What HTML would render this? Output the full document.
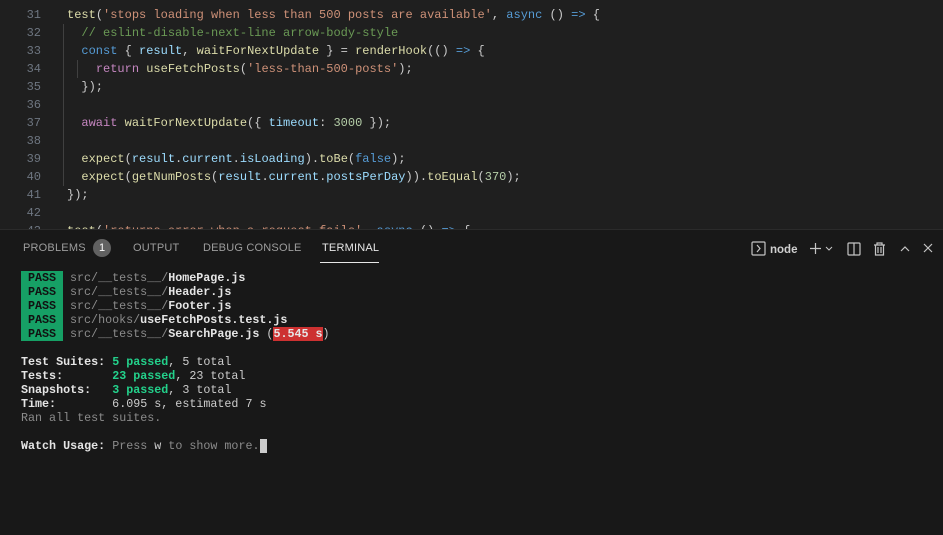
<!DOCTYPE html>
<html><head><style>
body{margin:0;width:943px;height:534px;background:#1f1f1f;overflow:hidden;font-family:"Liberation Mono",monospace;}
.ed{position:absolute;left:0;top:0;width:943px;height:229px;background:#1f1f1f;overflow:hidden}
.ln{position:absolute;height:18px;line-height:18px;font-size:12px;white-space:pre}
.num{color:#6e7681;width:41px;text-align:right;left:0}
.code{left:67px;color:#cccccc}
.s{color:#ce9178}.k{color:#569cd6}.c{color:#6a9955}.f{color:#dcdcaa}.v{color:#9cdcfe}.p{color:#c586c0}.n{color:#b5cea8}.w{color:#d4d4d4}
.guide{position:absolute;width:1px;background:#404040}
.panel{position:absolute;left:0;top:229px;width:943px;height:305px;background:#181818;border-top:1px solid #2b2b2b}
.tab{position:absolute;top:12px;font-family:"Liberation Sans",sans-serif;font-size:11px;color:#9d9d9d;letter-spacing:.2px}
.t{position:absolute;left:21px;font-size:11.7px;line-height:14px;white-space:pre;color:#cccccc}
.pass{background:#16a065;color:#111;font-weight:bold;padding:0 4px;display:inline-block;width:34px;text-align:center}
.g{color:#8b8b8b}.b{font-weight:bold;color:#e5e5e5}.gr{color:#23d18b;font-weight:bold}
</style></head><body>
<div class="ed">
<div class="guide" style="left:63px;top:24px;height:162px"></div>
<div class="guide" style="left:77px;top:60px;height:18px"></div>
<div class="ln num" style="top:6px">31</div><div class="ln code" style="top:6px"><span class="f">test</span>(<span class="s">'stops loading when less than 500 posts are available'</span>, <span class="k">async</span> () <span class="k">=&gt;</span> {</div>
<div class="ln num" style="top:24px">32</div><div class="ln code" style="top:24px">  <span class="c">// eslint-disable-next-line arrow-body-style</span></div>
<div class="ln num" style="top:42px">33</div><div class="ln code" style="top:42px">  <span class="k">const</span> { <span class="v">result</span>, <span class="f">waitForNextUpdate</span> } = <span class="f">renderHook</span>(() <span class="k">=&gt;</span> {</div>
<div class="ln num" style="top:60px">34</div><div class="ln code" style="top:60px">    <span class="p">return</span> <span class="f">useFetchPosts</span>(<span class="s">'less-than-500-posts'</span>);</div>
<div class="ln num" style="top:78px">35</div><div class="ln code" style="top:78px">  });</div>
<div class="ln num" style="top:96px">36</div>
<div class="ln num" style="top:114px">37</div><div class="ln code" style="top:114px">  <span class="p">await</span> <span class="f">waitForNextUpdate</span>({ <span class="v">timeout</span>: <span class="n">3000</span> });</div>
<div class="ln num" style="top:132px">38</div>
<div class="ln num" style="top:150px">39</div><div class="ln code" style="top:150px">  <span class="f">expect</span>(<span class="v">result</span>.<span class="v">current</span>.<span class="v">isLoading</span>).<span class="f">toBe</span>(<span class="k">false</span>);</div>
<div class="ln num" style="top:168px">40</div><div class="ln code" style="top:168px">  <span class="f">expect</span>(<span class="f">getNumPosts</span>(<span class="v">result</span>.<span class="v">current</span>.<span class="v">postsPerDay</span>)).<span class="f">toEqual</span>(<span class="n">370</span>);</div>
<div class="ln num" style="top:186px">41</div><div class="ln code" style="top:186px">});</div>
<div class="ln num" style="top:204px">42</div>
<div class="ln num" style="top:222px">43</div><div class="ln code" style="top:222px"><span class="f">test</span>(<span class="s">'returns error when a request fails'</span>, <span class="k">async</span> () <span class="k">=&gt;</span> {</div>
</div>
<div class="panel">
<div class="tab" style="left:23px">PROBLEMS</div>
<div style="position:absolute;left:93px;top:9px;width:18px;height:18px;border-radius:9px;background:#616161;color:#fff;font:11px 'Liberation Sans',sans-serif;text-align:center;line-height:18px">1</div>
<div class="tab" style="left:133px">OUTPUT</div>
<div class="tab" style="left:203px">DEBUG CONSOLE</div>
<div class="tab" style="left:322px;color:#e7e7e7">TERMINAL</div>
<div style="position:absolute;left:320px;top:32px;width:59px;height:1px;background:#e7e7e7"></div>
<svg style="position:absolute;left:750px;top:10px" width="190" height="18" viewBox="0 0 190 18" fill="none" stroke="#c5c5c5" stroke-width="1.2">
<rect x="2" y="2" width="13" height="13" rx="1"/><path d="M7 5l3 3.5-3 3.5"/>
<text x="20" y="13" fill="#d0d0d0" stroke="none" font-family="Liberation Sans" font-size="11.5" font-weight="bold">node</text>
<path d="M60 8.5h11M65.5 3v11"/><path d="M76 7l3 3 3-3" stroke-width="1"/>
<rect x="98" y="3" width="12" height="12" rx="1"/><path d="M104 3v12"/>
<path d="M124 5h11M127 5V3h5v2M125.5 5v10h8V5M128 7v6M131 7v6"/>
<path d="M151 11l4-4 4 4"/><path d="M174 4l8 8M182 4l-8 8"/>
</svg>
<div class="t" style="top:41px"><span class="pass">PASS</span> <span class="g">src/__tests__/</span><span class="b">HomePage.js</span></div>
<div class="t" style="top:55px"><span class="pass">PASS</span> <span class="g">src/__tests__/</span><span class="b">Header.js</span></div>
<div class="t" style="top:69px"><span class="pass">PASS</span> <span class="g">src/__tests__/</span><span class="b">Footer.js</span></div>
<div class="t" style="top:83px"><span class="pass">PASS</span> <span class="g">src/hooks/</span><span class="b">useFetchPosts.test.js</span></div>
<div class="t" style="top:97px"><span class="pass">PASS</span> <span class="g">src/__tests__/</span><span class="b">SearchPage.js</span> (<span style="background:#cd3131;color:#e5e5e5;font-weight:bold">5.545 s</span>)</div>
<div class="t" style="top:125px"><span class="b">Test Suites: </span><span class="gr">5 passed</span>, 5 total</div>
<div class="t" style="top:139px"><span class="b">Tests:       </span><span class="gr">23 passed</span>, 23 total</div>
<div class="t" style="top:153px"><span class="b">Snapshots:   </span><span class="gr">3 passed</span>, 3 total</div>
<div class="t" style="top:167px"><span class="b">Time:</span>        6.095 s, estimated 7 s</div>
<div class="t g" style="top:181px">Ran all test suites.</div>
<div class="t" style="top:209px"><span class="b">Watch Usage:</span> <span class="g">Press </span>w<span class="g"> to show more.</span><span style="background:#cccccc">&nbsp;</span></div>
</div>
</body></html>
